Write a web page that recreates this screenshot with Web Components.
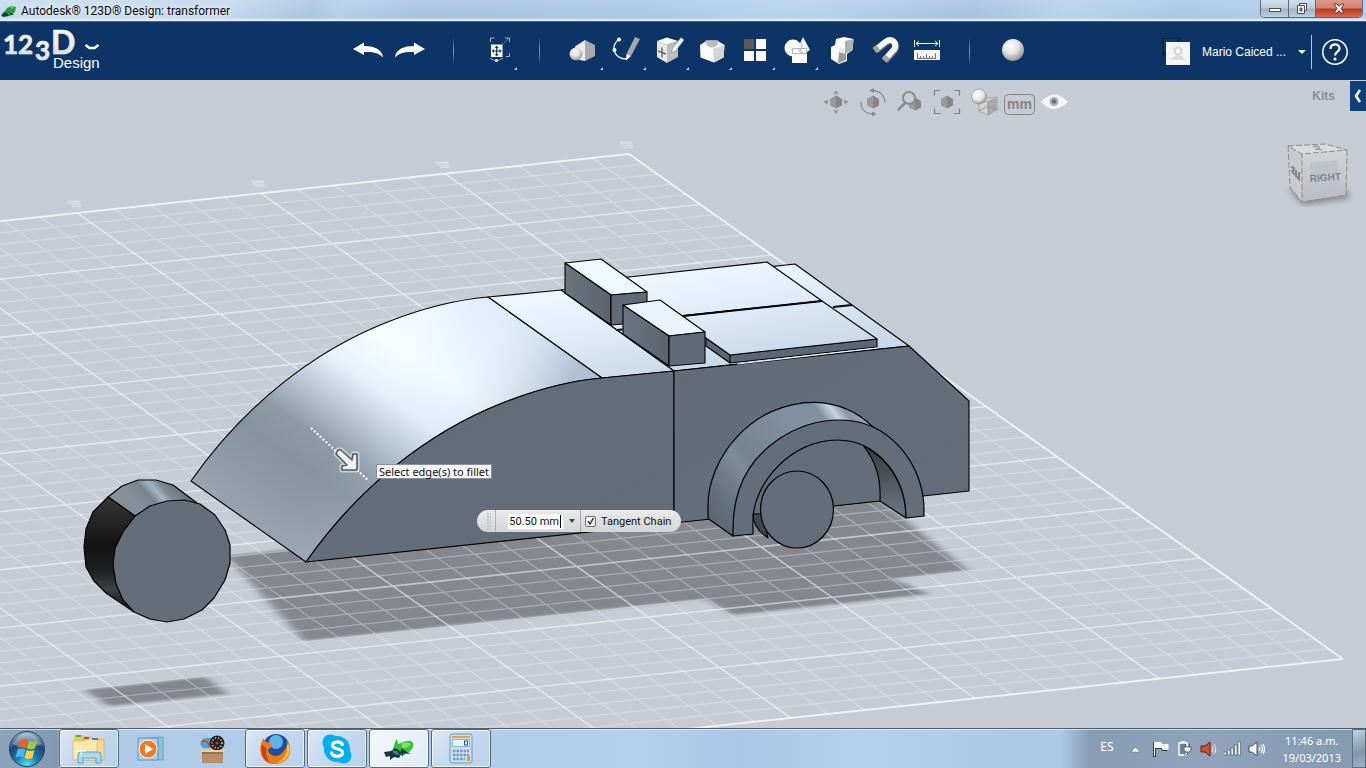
<!DOCTYPE html>
<html lang="en">
<head>
<meta charset="utf-8">
<title>Autodesk 123D Design: transformer</title>
<style>
html, body { height: 100%; margin: 0; }
body { font-family: "Noto Sans", "Open Sans", sans-serif; font-size: 12px; overflow: hidden; }
</style>
</head>
<body>
<design-app></design-app>

<template id="t-design-app">
  <style>
    :host { display: flex; flex-direction: column; height: 100%; }
    model-viewport { flex: 1; min-height: 0; }
  </style>
  <title-bar>Autodesk® 123D® Design: transformer</title-bar>
  <app-toolbar></app-toolbar>
  <model-viewport></model-viewport>
  <task-bar></task-bar>
</template>

<template id="t-title-bar">
  <style>
    :host { display: flex; align-items: flex-start; height: 22px; box-sizing: border-box; border-bottom: 1px solid #4f5d70;
      background: linear-gradient(rgba(255,255,255,.15), rgba(255,255,255,0) 85%, #e4eef8 96%),
        linear-gradient(112deg, #c4d9ee 0, #c0d6ed 17%, #a9c4e1 23%, #b2cdea 25%, #a6c2df 31%, #aac7e5 48%, #b6d2ee 58%, #a5c1df 71%, #b5d1ec 78%, #a8c6e3 86%, #b3cfeb 100%); }
    .name { display: flex; align-items: center; gap: 4px; height: 21px; flex: 1; padding-left: 1px; font-family: Roboto, sans-serif; line-height: 20px; color: #0a0a0a; text-shadow: 0 0 6px #fff, 0 0 10px #fff; }
    .buttons { display: flex; height: 18px; margin-right: 3px; border: 1px solid #5d6b7c; border-top: 0; border-radius: 0 0 5px 5px; box-sizing: border-box; overflow: hidden; }
    button { border: 0; padding: 0; margin: 0; height: 17px; background: linear-gradient(#d2dfec, #bccbdb 48%, #9eb1c6 52%, #bccfe2); border-right: 1px solid #5d6b7c; }
    button:nth-child(1) { width: 28px; } button:nth-child(2) { width: 27px; }
    .buttons .x { width: 46px; border: 0; background: linear-gradient(#e0998c, #d17f70 48%, #b9391f 52%, #d9694d); }
    .buttons svg { display: block; margin: auto; }
  </style>
  <div class="name">
    <svg width="16" height="16" viewBox="0 0 16 16"><path d="M1 10l3-2 2-3 4-2 5 1-1 5-5 4-5-1z" fill="#2a9a3c"/><path d="M0 12l5-3 3 4-6 1zM8 9l5 3-3 0z" fill="#123c30"/><path d="M8 4l5-1-1 3z" fill="#54d955"/></svg>
    <span><slot></slot></span>
  </div>
  <div class="buttons">
    <button aria-label="Minimize"><svg width="14" height="12" viewBox="0 0 14 12"><rect x="1.500" y="5.500" width="11" height="3" fill="#fff" stroke="#444d5c"/></svg></button>
    <button aria-label="Restore"><svg width="14" height="13" viewBox="0 0 14 13"><path d="M4.500 1.500h7v7h-7z" fill="#fff" stroke="#444d5c"/><path d="M2.500 3.500h7v8h-7z" fill="#fff" stroke="#444d5c"/><path d="M5 6h2v3H5z" fill="#8ea0b5" stroke="#444d5c"/></svg></button>
    <button class="x" aria-label="Close"><svg width="14" height="12" viewBox="0 0 14 12"><path d="M2 1h3l2 2.500L9 1h3L9 5.500 12 10H9L7 7.500 5 10H2l3-4.500z" fill="#fff" stroke="#5b3a40"/></svg></button>
  </div>
</template>

<template id="t-tool-button">
  <style>
    :host { display: block; width: 43px; height: 58px; }
    button { display: block; width: 100%; height: 100%; padding: 0; border: 0; background: none; position: relative; }
    .more { display: none; position: absolute; right: 1px; bottom: 10px; border: solid; border-width: 0 0 3px 3px; border-color: transparent transparent #d0d0d0 transparent; }
    :host([menu]) .more { display: block; }
  </style>
  <button><slot></slot><i class="more"></i></button>
</template>

<template id="t-app-toolbar">
  <style>
    :host { display: grid; grid-template-columns: minmax(0,346fr) 688px minmax(0,332fr); height: 58px; background: #0d3467; color: #fff; }
    .tools, .user { display: flex; }
    tool-button svg, .logo svg { display: block; }
    .sep { width: 43px; display: flex; justify-content: center; align-items: center; }
    .sep::before { content: ""; width: 1px; height: 26px; background: linear-gradient(rgba(160,170,180,.1), #8c9aae 50%, rgba(160,170,180,.1)); }
    .logo { padding: 0; border: 0; background: none; color: #fff; text-align: left; width: 110px; height: 58px; }
    .user { justify-content: flex-end; align-items: center; padding: 1px 17px 0 0; font: 12px "Liberation Sans", Arial, sans-serif; }
    .who { display: flex; align-items: center; padding: 0; border: 0; background: none; color: #fff; font: inherit; gap: 12px; }
    .caret { border: solid transparent; border-width: 4px 4px 0; border-top-color: #fff; }
    .help { margin-left: 5px; padding: 0 0 0 9px; height: 34px; border: 0; border-left: 1px solid #a7c8e6; background: none; }
    .help svg { display: block; }
  </style>
  <button class="logo" aria-label="123D Design menu">
    <svg width="110" height="58" viewBox="0 0 110 58">
      <defs><linearGradient id="lg" x1="0" y1="0" x2="0" y2="1"><stop offset="0" stop-color="#fff"/><stop offset="1" stop-color="#d5d8dd"/></linearGradient></defs>
      <g fill="url(#lg)" stroke="#eceef1" stroke-width=".7" font-family="Lato, sans-serif" font-weight="700">
        <text x="3" y="32" font-size="26">12</text><text x="35" y="38" font-size="26">3</text>
        <text x="51" y="32" font-size="32">D</text>
      </g>
      <text x="53" y="46" font-size="15" font-family="Liberation Sans, Arial, sans-serif" fill="#fff">Design</text>
      <path d="M85.500 23l4 3h5l4-3" fill="none" stroke="#fff" stroke-width="2.500"/>
    </svg>
  </button>
  <div class="tools">
    <tool-button><svg width="43" height="58"><path d="M7 27L18 20.500V24c10 0 18 3 19 11.500-4-4.500-10-6-19-5.500v3z" fill="#fff"/></svg></tool-button>
    <tool-button><svg width="43" height="58"><path d="M36 27L25 20.500V24c-10 0-18 3-19 11.500 4-4.500 10-6 19-5.500v3z" fill="#fff"/></svg></tool-button>
    <span class="sep"></span>
    <tool-button menu><svg width="43" height="58">
      <defs>
        <radialGradient id="sp" cx=".4" cy=".32" r=".7"><stop offset="0" stop-color="#fff"/><stop offset=".5" stop-color="#e3e3e3"/><stop offset="1" stop-color="#8f8f8f"/></radialGradient>
      </defs>
      <rect x="16" y="22.500" width="11.500" height="12.500" fill="#fff"/><path d="M21.700 25v8M18 29h7.500" stroke="#0d3467" stroke-width="1.200"/><path d="M19.700 26l2-2.500 2 2.500zM19.700 32l2 2.500 2-2.500zM19 27l-2.300 2 2.300 2zM24.500 27l2.300 2-2.300 2z" fill="#0d3467"/>
      <path d="M15.500 20v-4h4M30 16h4.500v4M34.500 31v3.500H31" fill="none" stroke="#a9b6c8"/><path d="M27 22.500l6-5.500" stroke="#8f9fb5" stroke-dasharray="2 1"/>
      <path d="M15 36q6 5 13 0" fill="none" stroke="#93a5bc"/><circle cx="21.500" cy="38.500" r="1.500" fill="#fff"/></svg></tool-button>
    <span class="sep"></span>
    <tool-button menu><svg width="43" height="58"><path d="M14 24.500L24 18v21l-10-2z" fill="#ececec"/><path d="M24 18l10 5v11l-10 5z" fill="#a9a9a9"/><circle cx="15" cy="32" r="6.500" fill="url(#sp)"/></svg></tool-button>
    <tool-button menu><svg width="43" height="58"><path d="M15 17Q9 22 10 28q2 9 13 9" fill="none" stroke="#e8ecf2" stroke-width="1.300"/><circle cx="15" cy="17.500" r="2" fill="#fff"/><circle cx="10.500" cy="28" r="2" fill="#fff"/><path d="M31 15l5 2-9 17-4.500-2z" fill="#a8a8a8"/><path d="M22.500 32l4.500 2-5 4.500z" fill="#fff"/></svg></tool-button>
    <tool-button menu><svg width="43" height="58"><path d="M10 19l10-3.500 11 3.500-11 4z" fill="#fff"/><path d="M10 19l10 4v18l-10-6z" fill="#e9e9e9"/><path d="M20 23l11-4v16l-11 6z" fill="#bdbdbd"/><path d="M15 25.500v10M11 29l8 3" stroke="#6a6a6a" stroke-width="1.500"/><path d="M34 15.500l3 2.500-8.500 11-4 2 1-4.500z" fill="#f6f6f6" stroke="#8a8f98" stroke-width=".7"/></svg></tool-button>
    <tool-button menu><svg width="43" height="58"><path d="M10 23l7-4.500h10l7.500 4.500-1 12.500-9.500 5-13.500-5z" fill="#fafafa"/><path d="M23 27l11.500-4-1 12.500-9.500 5z" fill="#d4d4d4"/><path d="M15.500 18.500h13c0 5-3 7-6.500 7s-6.500-2-6.500-7z" fill="#bcbcbc"/></svg></tool-button>
    <tool-button menu><svg width="43" height="58"><path d="M11 17h10v10H11z" fill="#5b5b5b"/><path d="M23 17h10v10H23zM11 29h10v10H11zM23 29h10v10H23z" fill="#f8f8f8"/></svg></tool-button>
    <tool-button menu><svg width="43" height="58"><circle cx="17" cy="26" r="8.500" fill="#fff"/><path d="M27 15l7 13q-3 3-7 3t-6-3z" fill="#f4f4f4"/><path d="M16 26h15v15H16z" fill="#fff"/><path d="M16.500 26.500h14v5h-14zM24 30q2-3 2-8M22 27q2 4 5 4" fill="none" stroke="#b4b4b4"/></svg></tool-button>
    <tool-button><svg width="43" height="58"><path d="M12 25l4-2 1-6 8-2 9.500 2-1 11-5.500 4v7l-8 3-8-5z" fill="#fff"/><path d="M26 19l8.500-2-1 11.500-7.500 3.500z" fill="#b0b0b0"/><path d="M20 30l7 1v7l-8 3.500z" fill="#9a9a9a"/><path d="M20 30l1-5 5 2v5z" fill="#e8e8e8"/></svg></tool-button>
    <tool-button><svg width="43" height="58"><path d="M13 28L24 19.500c6-4.500 12 2 8 8L22.500 38" transform="translate(1 1)" fill="none" stroke="#6d6d6d" stroke-width="6"/><path d="M13 28L24 19.500c6-4.500 12 2 8 8L22.500 38" fill="none" stroke="#fff" stroke-width="6"/><path d="M12.500 28.500l4-3M22 38.500l3.500-4" stroke="#a3a3a3" stroke-width="6"/></svg></tool-button>
    <tool-button><svg width="43" height="58"><path d="M9.500 18v7M34.500 18v7M11 21.500h22M14 19l-3 2.500 3 2.500M30 19l3 2.500-3 2.500" fill="none" stroke="#fff"/><path d="M9 28h26v10H9z" fill="#f4f4f4"/><path d="M12.500 31v6M15.500 34v3M18.500 34v3M21.500 32v5M24.500 34v3M27.500 34v3M30.500 31v6M12 36.500h19" stroke="#777"/></svg></tool-button>
    <span class="sep"></span>
    <tool-button><svg width="43" height="58"><circle cx="22" cy="28" r="11" fill="url(#sp)"/></svg></tool-button>
  </div>
  <div class="user">
    <button class="who">
      <svg width="28" height="30" viewBox="0 0 28 30"><path d="M0 1h20L0 21z" fill="#06264d"/><path d="M2 2h15L2 15z" fill="#0b4068"/><path d="M11 5l3 0-2 2z" fill="#c33"/><rect x="4" y="5" width="24" height="23" fill="#f4f4f4"/><circle cx="16" cy="14" r="3.500" fill="none" stroke="#d6d6d6" stroke-width="2"/><path d="M10.500 22q5.500-6 11 0z" fill="#e6e6e6" stroke="#d6d6d6" stroke-width="1.500"/></svg>
      <span>Mario Caiced ...</span><i class="caret"></i></button>
    <button class="help" aria-label="Help"><svg width="28" height="28" viewBox="0 0 28 28"><circle cx="14" cy="14" r="12.200" fill="none" stroke="#fff" stroke-width="1.500"/><path d="M9.500 11c0-6 9-6 9-.8 0 3.600-4.500 3.600-4.500 7.300" fill="none" stroke="#fff" stroke-width="2.200"/><circle cx="14" cy="21" r="1.600" fill="#fff"/></svg></button>
  </div>
</template>

<template id="t-view-tools">
  <style>
    :host { display: flex; }
    button { width: 37px; height: 34px; padding: 0; border: 0; background: none; }
    svg { display: block; }
  </style>
  <button aria-label="Pan"><svg width="37" height="34">
    <defs><g id="cube"><path d="M-6-3L0-6.500V6.500L-6 3.500z" fill="#9a9a9a"/><path d="M0-6.500L6-3V3.500L0 6.500z" fill="#858585"/></g></defs>
    <use href="#cube" x="18" y="17"/><path d="M16 9l2-3.500L20 9l-2-1zM16 25l2 3.500 2-3.500-2 1zM10 15l-4 2 4 2-1-2zM26 15l4 2-4 2 1-2z" fill="#8c8c8c" stroke="#8c8c8c" stroke-width=".6"/></svg></button>
  <button aria-label="Orbit"><svg width="37" height="34"><use href="#cube" x="18" y="17"/><path d="M17 5.500c8 0 12.500 5 13 12M6 17c0 8 5 12 13 12" fill="none" stroke="#8c8c8c" stroke-width="1.300"/><path d="M14 5.500l5-2.500v5zM22 29l-5-2.500v5z" fill="#8c8c8c"/></svg></button>
  <button aria-label="Zoom"><svg width="37" height="34"><use href="#cube" x="23" y="19"/><circle cx="17" cy="13" r="6" fill="#c5ccd4" stroke="#8a8a8a" stroke-width="2"/><path d="M13 18l-7 7" stroke="#8a8a8a" stroke-width="2.500"/></svg></button>
  <button aria-label="Fit"><svg width="37" height="34"><use href="#cube" x="18" y="17"/><path d="M5.500 10.500v-5h6M25.500 5.500h5v5M5.500 23.500v5h6M25.500 28.500h5v-5" fill="none" stroke="#7f7f7f" stroke-width="1.200"/></svg></button>
  <button aria-label="Visual style"><svg width="37" height="34"><defs><radialGradient id="vs" cx=".4" cy=".35" r=".7"><stop offset="0" stop-color="#fff"/><stop offset=".6" stop-color="#e2e2e2"/><stop offset="1" stop-color="#8d8d8d"/></radialGradient></defs><path d="M13 16l9-3 9-1v13l-9 5-9-4z" fill="#d0d2d5" stroke="#9b9b9b" stroke-width=".8"/><path d="M22 16l9-4v13l-9 5z" fill="#a9a9a9"/><path d="M13 16l9 1v13M13 26l9-5 9 4" fill="none" stroke="#8f8f8f" stroke-width=".8"/><circle cx="13" cy="11.500" r="7.500" fill="url(#vs)" stroke="#8a8a8a" stroke-width=".6"/></svg></button>
  <button aria-label="Units"><svg width="37" height="34"><rect x="1.500" y="9.500" width="30" height="20" rx="4" fill="none" stroke="#858585"/><text x="16.500" y="24" text-anchor="middle" font-family="Liberation Sans, Arial, sans-serif" font-size="14" font-weight="700" fill="#858585">mm</text></svg></button>
  <button aria-label="Visibility"><svg width="37" height="34"><path d="M1 17q13-15 27 0-14 14-27 0z" fill="#f3f5f7"/><circle cx="14" cy="16.500" r="4.500" fill="#aeb0b2"/><circle cx="14" cy="16.500" r="2.200" fill="#6e6e6e"/></svg></button>
</template>

<template id="t-fillet-panel">
  <style>
    :host { display: inline-flex; height: 22px; width: 204px; border-radius: 11px; background: linear-gradient(#e9ebeb, #d2d5d5); font: 11px Roboto, sans-serif; color: #111; align-items: center; box-sizing: border-box; }
    .grip { width: 19px; height: 22px; border-right: 1px solid #aab0b6; display: flex; justify-content: flex-end; align-items: center; box-sizing: border-box; }
    .grip::before { content: ""; width: 4px; height: 17px; margin-right: 4px; background: radial-gradient(circle at 1px 1px, #bfc3c6 1px, transparent 1px) 0 0/3px 3px; }
    input[type=text] { width: 57px; height: 17px; margin-left: 11px; box-sizing: border-box; padding: 0 4px 0 0; border: 1px solid #dfe2e4; background: #fff; font: 11px Roboto, sans-serif; text-align: right; color: #111; outline: 0; }
    .drop { width: 17px; height: 22px; padding: 0; border: 0; border-right: 1px solid #a4abb2; background: none; display: flex; justify-content: center; align-items: center; box-sizing: border-box; }
    .drop::before { content: ""; border: solid transparent; border-width: 4px 3px 0; border-top-color: #444; }
    label { display: flex; align-items: center; gap: 5px; margin-left: 4px; white-space: nowrap; }
    input[type=checkbox] { appearance: none; width: 11px; height: 11px; margin: 0; border: 1px solid #6c6f72; border-radius: 2px; background: #efefef url("data:image/svg+xml,%3Csvg xmlns='http://www.w3.org/2000/svg' viewBox='0 0 9 9'%3E%3Cpath d='M2 4l2 3 3.500-6' fill='none' stroke='%23222' stroke-width='1.300'/%3E%3C/svg%3E"); }
    .field { position: relative; display: flex; }
    .field::after { content: ""; position: absolute; right: 3px; top: 2px; width: 1px; height: 13px; background: #000; }
  </style>
  <span class="grip"></span>
  <span class="field"><input type="text" value="50.50 mm" aria-label="Radius"></span>
  <button class="drop" aria-label="Units"></button>
  <label><input type="checkbox" checked><span>Tangent Chain</span></label>
</template>

<template id="t-model-viewport">
  <style>
    :host { display: block; position: relative; overflow: hidden; background: #c5ccd5; }
    .scene { display: block; width: 100%; height: 100%; }
    view-tools { position: absolute; top: 5px; right: 289px; }
    .kits { position: absolute; top: 1px; right: 0; display: flex; align-items: center; gap: 15px; }
    .kits a { font: bold 12px "Liberation Sans", Arial, sans-serif; color: #8a8c8f; text-decoration: none; }
    .kits button { width: 16px; height: 30px; padding: 0; border: 0; background: #114077; }
    .kits svg, .cube { display: block; }
    .cube { position: absolute; top: 57px; right: 10px; }
    .tip { position: absolute; top: 384px; left: 376px; height: 15px; box-sizing: border-box; padding: 0 2px; border: 1px solid #8f8f96; background: #f7f7fb; font-size: 11px; line-height: 13px; color: #111; white-space: nowrap; }
    fillet-panel { position: absolute; top: 430px; left: 477px; }
  </style>
  <svg class="scene" viewBox="0 80 1366 648" preserveAspectRatio="xMidYMid slice">
    <defs>
      <linearGradient id="hood" gradientUnits="userSpaceOnUse" x1="191" y1="481" x2="376" y2="219">
        <stop offset="0" stop-color="#98a3af"/><stop offset=".24" stop-color="#84939c"/><stop offset=".34" stop-color="#8d9ba6"/><stop offset=".46" stop-color="#bac9d5"/><stop offset=".57" stop-color="#e6f2fa"/><stop offset=".72" stop-color="#f7ffff"/><stop offset="1" stop-color="#e4effc"/></linearGradient>
      <linearGradient id="hoodShade" gradientUnits="userSpaceOnUse" x1="430" y1="313" x2="555" y2="401">
        <stop offset="0" stop-color="#b8cfe8" stop-opacity="0"/><stop offset=".45" stop-color="#c0d8f4" stop-opacity=".18"/><stop offset=".7" stop-color="#a9c0d6" stop-opacity=".32"/><stop offset="1" stop-color="#8499ad" stop-opacity=".55"/></linearGradient>
      <linearGradient id="top" gradientUnits="userSpaceOnUse" x1="660" y1="262" x2="680" y2="372"><stop offset="0" stop-color="#effaff"/><stop offset=".45" stop-color="#e2effb"/><stop offset="1" stop-color="#c9d9e7"/></linearGradient>
      <linearGradient id="side" x1="0" y1="0" x2="1" y2="1"><stop offset="0" stop-color="#626c79"/><stop offset=".5" stop-color="#636e7a"/><stop offset="1" stop-color="#646d79"/></linearGradient>
      <linearGradient id="fender" gradientUnits="userSpaceOnUse" x1="708" y1="530" x2="870" y2="410"><stop offset="0" stop-color="#56616b"/><stop offset=".15" stop-color="#64717e"/><stop offset=".32" stop-color="#7c8b98"/><stop offset=".38" stop-color="#748390"/><stop offset=".65" stop-color="#8191a3"/><stop offset=".79" stop-color="#82919f"/><stop offset=".85" stop-color="#c5d4e1"/><stop offset=".9" stop-color="#8593a0"/><stop offset=".96" stop-color="#a8a9ac"/><stop offset="1" stop-color="#7a858f"/></linearGradient>
      <linearGradient id="inner" gradientUnits="userSpaceOnUse" x1="880" y1="450" x2="890" y2="512"><stop offset="0" stop-color="#3b3f44"/><stop offset=".5" stop-color="#50575f"/><stop offset="1" stop-color="#66737f"/></linearGradient>
      <linearGradient id="tyre" gradientUnits="userSpaceOnUse" x1="110" y1="500" x2="110" y2="600"><stop offset="0" stop-color="#353535"/><stop offset=".45" stop-color="#131313"/><stop offset=".72" stop-color="#202122"/><stop offset=".9" stop-color="#3e4246"/><stop offset="1" stop-color="#20272c"/></linearGradient>
      <linearGradient id="tyreTop" gradientUnits="userSpaceOnUse" x1="122" y1="516" x2="172" y2="470"><stop offset="0" stop-color="#848f99"/><stop offset=".3" stop-color="#84909a"/><stop offset=".5" stop-color="#75838e"/><stop offset=".62" stop-color="#a5b5c2"/><stop offset=".72" stop-color="#7d8b97"/><stop offset="1" stop-color="#5b6873"/></linearGradient>
      <linearGradient id="block" x1="0" y1="0" x2="1" y2="0"><stop offset="0" stop-color="#6b7680"/><stop offset="1" stop-color="#5b636d"/></linearGradient>
      <filter id="soft" x="-10%" y="-10%" width="120%" height="120%" color-interpolation-filters="sRGB"><feGaussianBlur stdDeviation="5 1"/></filter>
    </defs>
    <g filter="url(#soft)" fill="#84888e">
      <path d="M226 556L570 520 880 500 968 570 893 579 929 594 733 615 705 599 304 641z"/>
      <path d="M85 690L205 677 228 694 109 706z"/>
    </g>
    <g id="grid" fill="none" stroke="#fff"></g>
    <g fill="none" stroke="#fff" stroke-opacity=".4">
      <path id="mark" d="M67 201l13 0M68 203l12-1M70 205l11-1M72 207l10-1M69 201l6 6M74 201l6 6" stroke-width="1.100"/>
      <use href="#mark" x="184" y="-20"/><use href="#mark" x="368" y="-39"/><use href="#mark" x="552" y="-59"/>
    </g>
    <g stroke="#000" stroke-width="1.100" stroke-linejoin="round">
      <path d="M561 290L795 264 909 346 674 371z" fill="url(#top)"/>
      <path d="M488 297L561 290 674 371 602 378z" fill="url(#top)"/>
      <path d="M191 481C245 404 315 351 385 323 415 311 452 300 488 297L602 378C567 381 530 392 500 404 430 432 360 485 306 562z" fill="url(#hood)" stroke="none"/>
      <path d="M191 481C245 404 315 351 385 323 415 311 452 300 488 297L602 378C567 381 530 392 500 404 430 432 360 485 306 562z" fill="url(#hoodShade)"/>
      <path d="M306 562C360 485 430 432 500 404 530 392 567 381 602 378L674 371V523z" fill="url(#side)"/>
      <path d="M674 371L909 346 969 401V491L674 523z" fill="url(#side)"/>
      <path d="M616 330L640 328" stroke-width="2"/>
      <path d="M833 307L852 305" stroke-width="2.200"/>
      <path d="M610 279L767 262 822 301 650 319z" fill="url(#top)"/>
      <path d="M706 338L730 355 877 339V347L730 363 706 346z" fill="#5c6772"/>
      <path d="M683 316L822 301 877 339 730 355 706 338z" fill="url(#top)"/>
      <path d="M683 316L822 301" stroke-width="2"/><path d="M730 355V363"/>
      <path d="M737 364L877 348" stroke="#e9f4fc"/>
      <path d="M565 263L601 259 647 292 611 295z" fill="#eef9ff"/><path d="M565 263L611 295V325L565 293z" fill="url(#block)"/><path d="M611 295L647 292V322L611 325z" fill="#5f6b77"/>
      <path d="M623 305L660 300 705 332 669 336z" fill="#e9f4fe"/><path d="M623 305L669 336V366L623 334z" fill="url(#block)"/><path d="M669 336L705 332V363L669 366z" fill="#5f6b77"/>
    </g>
    <g stroke="#000" stroke-width="1.200" stroke-linejoin="round">
      <path d="M708 518.500V505C708 460 750 402 815 402.300 838 403 858 412 873 427L840 440C790 440 755 485 751 520L733 536z" fill="url(#fender)"/>
      <path d="M840 440Q860 441 864 446C876 462 880 480 880 501L838 505.500 760 514 753 520C753 485 790 440 840 440z" fill="#636e7a" stroke="none"/>
      <path d="M833 506L880 501"/>
      <path d="M863 445C877 463 881 480 880 501L906 518C906 490 894 463 863 445z" fill="url(#inner)"/>
      <path d="M733 536C733 517 734 505 739 490 752 450 795 420 840 420 890 420 924 465 924 510V516L906 518C906 480 880 440 837 440 790 440 753 485 753 520V534z" fill="#636e7a"/>
      <path d="M753 514H762L768 538Q753 528 753 514z" fill="#3f474f"/>
      <ellipse cx="797" cy="509.500" rx="36.500" ry="38.500" fill="#636e7a"/>
    </g>
    <g stroke="#000" stroke-width="1.200" stroke-linejoin="round">
      <path d="M108 497L122 486 138 480H156L173 485 197 503 170 510 135 516z" fill="url(#tyreTop)"/>
      <path d="M108 497L93 512 86 529 84 547 86 567 94 581 106 593 134 612 123 565 135 516z" fill="url(#tyre)"/>
      <path d="M167 501L185 500 200 504 215 515 225 530 230 545V563L225 580 214 598 202 610 184 619 167 622 150 619 134 612 123 600 116 584 113 565 115 548 123 532 135 516 150 506z" fill="#636e7a"/>
    </g>
    <path d="M311 428L338 453M357 470L369 481" stroke="#5f6a70" stroke-width="3.500" stroke-opacity=".5" stroke-dasharray="2 2"/>
    <path d="M311 428L338 453M357 470L369 481" stroke="#fff" stroke-width="2.500" stroke-dasharray="2 2"/>
    <path d="M338 450L336 454 347 465 342 466 342 470 357 470 357 454 353 454 352 460 341 450z" fill="#e9ecee" stroke="#fff" stroke-width="5" stroke-opacity=".5" stroke-linejoin="round"/>
    <path d="M338 450L336 454 347 465 342 466 342 470 357 470 357 454 353 454 352 460 341 450z" fill="#eceeef" stroke="#55595c" stroke-width="1.600" stroke-linejoin="round"/>
  </svg>
  <view-tools></view-tools>
  <div class="kits"><a href="#kits">Kits</a><button aria-label="Open kits"><svg width="16" height="30"><path d="M10 9l-4 6 4 6" fill="none" stroke="#fff" stroke-width="2.500"/></svg></button></div>
  <svg class="cube" width="76" height="76" viewBox="1280 137 76 76">
    <defs><filter id="cs"><feGaussianBlur stdDeviation="3"/></filter><linearGradient id="cf" x1="0" y1="0" x2="0" y2="1"><stop offset="0" stop-color="#d3d5d8"/><stop offset="1" stop-color="#b9bbbe"/></linearGradient></defs>
    <path d="M1288 188L1303 205 1350 198 1346 190z" fill="#6d747c" filter="url(#cs)" opacity=".8"/>
    <path d="M1288 146L1325 144 1347 150 1302 154z" fill="#d9dbde"/><path d="M1288 146L1302 154V202L1290 187z" fill="#c8cacd"/><path d="M1302 154L1347 150 1346 195 1302 202z" fill="url(#cf)"/>
    <path d="M1288 146L1325 144 1347 150 1302 154zM1288 146L1290 187 1302 202V154M1347 150L1346 195 1302 202" fill="none" stroke="#8b8e91" stroke-dasharray="6 2"/>
    <path d="M1310 163l28-3v28l-28 4z" fill="#bcc3cd"/>
    <text x="1310" y="182" font-family="Liberation Sans, Arial, sans-serif" font-size="10" font-weight="700" fill="#7c838e" transform="rotate(-4 1310 182)">RIGHT</text>
    <path d="M1291 167l3 1v2l-2 1 3 4M1296 170v6l3 3v-7" fill="none" stroke="#84888e" stroke-width="2"/><path d="M1313 147q4-2 6 0t-4 2l7 1" fill="none" stroke="#a2a5a8" stroke-width="1.500"/>
  </svg>
  <div class="tip" role="tooltip">Select edge(s) to fillet</div>
  <fillet-panel></fillet-panel>
</template>

<template id="t-task-button">
  <style>
    :host { display: block; width: 60px; height: 40px; }
    button { display: flex; align-items: center; justify-content: center; width: 100%; height: 100%; padding: 0; box-sizing: border-box; border: 0; background: none; }
    :host([open]) button { border: 1px solid #56687c; border-radius: 3px; box-shadow: inset 0 0 0 1px rgba(255,255,255,.7); background: linear-gradient(135deg, rgba(255,255,255,.55), rgba(255,255,255,.25) 45%, rgba(255,255,255,.1)); }
    :host([active]) button { background: linear-gradient(135deg, rgba(255,255,255,.85), rgba(255,255,255,.6)); }
  </style>
  <button><slot></slot></button>
</template>

<template id="t-task-bar">
  <style>
    :host { display: flex; height: 40px; box-sizing: border-box; border-top: 1px solid #4e5c6b;
      background: linear-gradient(rgba(255,255,255,.6) 0, rgba(255,255,255,.6) 1px, transparent 1px), linear-gradient(90deg, #8ea4bc 0, #8299b3 58px, #b0cbe8 60px, #b2cdea 500px, #b3d0ed 640px, #a9c6e4 740px, #b5d1ed 860px, #aac7e4 1030px, #aecae7 1060px, #869cb3 1090px, #8fa4ba 1200px, #8499b0 1366px); }
    .start { width: 59px; padding: 0 5px 0 0; border: 0; background: none; }
    svg { display: block; margin: auto; }
    .apps { display: flex; flex: 1; gap: 2px; }
    .apps task-button { height: 39px; }
  </style>
  <button class="start" aria-label="Start"><svg width="38" height="38" viewBox="0 0 38 38">
    <defs><radialGradient id="orb" cx=".5" cy=".95" r=".9"><stop offset="0" stop-color="#4fe3f5"/><stop offset=".35" stop-color="#1c7fb4"/><stop offset=".7" stop-color="#1b4873"/><stop offset="1" stop-color="#8fa9bf"/></radialGradient></defs>
    <circle cx="19" cy="19" r="17.500" fill="url(#orb)" stroke="#253f58"/><path d="M5 14Q19-8 33 14q-14 8-28 0z" fill="#fff" opacity=".3"/>
    <path d="M12 10q4-2 8 0l-2 8q-4-2-8 0z" fill="#f0602b"/><path d="M21 10.500q4 2 8 0l-2 8q-4 2-8 0z" fill="#93cc3f"/><path d="M9.500 19.500q4-2 8 0l-2 8q-4-2-8 0z" fill="#4cb4f0"/><path d="M18.500 20q4 2 8 0l-2 8q-4 2-8 0z" fill="#fdcf3b"/></svg></button>
  <div class="apps">
    <task-button open><svg width="34" height="32" viewBox="0 0 34 32"><path d="M2 2h9l2 3h18v22H2z" fill="#e9c96b"/><path d="M11 4h9l2 3h10v20H11z" fill="#f1da8c" stroke="#c9a64c" stroke-width=".6"/><path d="M1 8h11l3-2h10v21H1z" fill="#f9eaa8" stroke="#cfae55" stroke-width=".6"/><path d="M4 2h5v2H4z" fill="#36b24a"/><path d="M12 4h5v2h-5z" fill="#d7442e"/><path d="M20 5h6v2h-6z" fill="#3f7fd0"/><path d="M6 30V22q0-3 3-3h17q3 0 3 3v8h-5v-5H11v5z" fill="#a9d8ef" stroke="#5fa3c8"/><path d="M9 13v10M4 18h10" stroke="#fff"/></svg></task-button>
    <task-button><svg width="30" height="30" viewBox="0 0 30 30"><path d="M8 4l19-1v23l-19-1z" fill="#8fc0de" stroke="#6aa0c2"/><path d="M2 4h20v22H2z" fill="#a9d0e8" stroke="#5d96bb"/><circle cx="12" cy="15" r="9" fill="#f07a1c" stroke="#fff"/><path d="M9 10l8 5-8 5z" fill="#fff"/></svg></task-button>
    <task-button><svg width="32" height="32" viewBox="0 0 32 32"><path d="M3 11q2-8 11-6l8 10H6z" fill="#4aa8d8"/><path d="M5 9q4-4 8 5" fill="none" stroke="#d8442c" stroke-width="2"/><circle cx="20" cy="10" r="7.500" fill="#222"/><circle cx="20" cy="10" r="5" fill="none" stroke="#c9bd9e" stroke-dasharray="1 2" stroke-width="2"/><circle cx="20" cy="10" r="1.500" fill="#d33"/><path d="M3 17h25l-2 3H5z" fill="#edcfa4"/><path d="M5 19h21v11H5z" fill="#b58f6c"/><path d="M5 19h21v2H5z" fill="#94714f"/></svg></task-button>
    <task-button open><svg width="34" height="34" viewBox="0 0 34 34"><circle cx="18" cy="15" r="13" fill="#1d4f9c"/><circle cx="18" cy="10" r="7" fill="#5fb2e6"/><path d="M29 7c6 9 4 24-11 25C6 33 0 23 3 12l2-6 3 4 6 1-1 4-3 3c1 6 10 8 14 3 3-3 6-7 5-14z" fill="#ec7a1b"/><path d="M31 13c2 9-3 17-12 18 8-4 11-10 10-18z" fill="#ffcb3d"/><path d="M4 12c-2 8 1 16 8 19-4-6-5-10-3-14z" fill="#c6421a"/></svg></task-button>
    <task-button open><svg width="32" height="32" viewBox="0 0 32 32"><circle cx="16" cy="16" r="13" fill="#00aff0"/><circle cx="9.500" cy="9.500" r="8" fill="#00aff0"/><circle cx="22.500" cy="22.500" r="8" fill="#00aff0"/><path d="M21.500 11.500q-2-3-6-2.500-4 .5-4 3.500c0 4 10 2.500 10 7 0 3-3 3.800-5.500 3.800q-4 0-5.500-3.300" fill="none" stroke="#fff" stroke-width="3.200" stroke-linecap="round"/></svg></task-button>
    <task-button open active><svg width="32" height="28" viewBox="0 0 32 28"><path d="M10 14l2-7 2-3 1 5 5-2q8-3 10 1t-5 10q-7 5-13 0z" fill="#35c435"/><path d="M19 8q7-2 9 1-4 5-9 4z" fill="#7be45a"/><path d="M1 17l7-1 4-3 7 4-3 6-5-1-4 3 0-4-4 1zM18 13l6 4 4 2-7-1-2 4z" fill="#17353a"/><path d="M9 15l5 1 3 4-6-1z" fill="#3f7fa0"/></svg></task-button>
    <task-button open><svg width="24" height="32" viewBox="0 0 24 32"><rect x="1" y="1" width="22" height="29" rx="2" fill="#c7dff2" stroke="#6d9cc4"/><path d="M3 3h18v2H3z" fill="#f0a13c"/><rect x="3.500" y="6.500" width="17" height="7" fill="#e9f2fa" stroke="#8fb4d3"/><rect x="15.500" y="8" width="3" height="4" fill="none" stroke="#33536f"/><path d="M4 18h16M4 22h16M4 26h12" stroke="#7797b8" stroke-width="2.500" stroke-dasharray="2.500 1"/><path d="M18 23h3v5h-3z" fill="#f09a28"/></svg></task-button>
  </div>
  <system-tray></system-tray>
</template>

<template id="t-system-tray">
  <style>
    :host { display: flex; align-items: center; color: #fff; }
    button { padding: 0; border: 0; background: none; color: inherit; font: inherit; }
    .lang { font-size: 12px; margin: 0 18px 5px 0; }
    .icons { display: flex; gap: 7px; margin: 1px 17px 0 0; }
    svg { display: block; }
    .icons button:first-child { margin-right: 5px; }
    time { font-size: 11px; line-height: 17px; text-align: center; margin-right: 11px; }
    time span { display: block; }
    .desk { width: 14px; height: 39px; border: 1px solid #5d7083; box-sizing: border-box; background: linear-gradient(160deg, #c5d2df, #8095ab 60%, #9db1c5); }
  </style>
  <button class="lang">ES</button>
  <div class="icons">
    <button aria-label="Hidden icons"><svg width="9" height="16"><path d="M0 11l4.500-5L9 11z" fill="#fff" stroke="#516579" stroke-width=".5"/></svg></button>
    <button aria-label="Action centre"><svg width="17" height="18"><path d="M2.500 17V2" stroke="#30404f" stroke-width="3"/><path d="M2.500 16V2M3 2.500h6l1 2h6v5h-5l-1-2H3z" fill="#fff" stroke="#fff"/><path d="M3.500 8.500h6l1 2h5" fill="none" stroke="#30404f"/></svg></button>
    <button aria-label="Power"><svg width="17" height="18"><path d="M3 3h8v12H3z" fill="#6f849a" stroke="#fff" stroke-width="1.500"/><path d="M5 1h4v2H5z" fill="#fff"/><path d="M8 7h7v3l-2 2h-3l-2-2zM9.500 4v3M13.500 4v3M11.500 12v3H8" fill="#fff" stroke="#3b4c5e" stroke-width=".8"/></svg></button>
    <button aria-label="Audio manager"><svg width="17" height="18"><path d="M1 6h4l5-4v14l-5-4H1z" fill="#d9502f" stroke="#6a1d10"/><path d="M12 6q2 3 0 6M14 4q3.500 5 0 10" fill="none" stroke="#f7d7cd" stroke-width="1.200"/></svg></button>
    <button aria-label="Network"><svg width="17" height="18"><path d="M0 12h2.500v3H0zM3.500 10H6v5H3.500zM7 8h2.500v7H7zM10.500 5H13v10h-2.500zM14 2h2.500v13H14z" fill="#eef3f8" stroke="#44566a" stroke-width=".6"/></svg></button>
    <button aria-label="Volume"><svg width="17" height="18"><path d="M1 6h3l5-4v14l-5-4H1z" fill="#fff" stroke="#3f5062"/><path d="M11 7q1.500 2 0 4M13 5q3 4 0 8M15 4q3 5 0 10" fill="none" stroke="#fff" stroke-width="1.200"/></svg></button>
  </div>
  <time datetime="2013-03-19T11:46"><span>11:46 a.m.</span><span>19/03/2013</span></time>
  <button class="desk" aria-label="Show desktop"></button>
</template>

<script>
class TemplateElement extends HTMLElement {
  constructor() {
    super();
    const root = this.attachShadow({ mode: "open" });
    root.append(document.getElementById("t-" + this.localName).content.cloneNode(true));
  }
}

class ModelViewport extends TemplateElement {
  constructor() {
    super();
    this.drawGrid();
  }
  // The work plane is a parallelogram: 5 cells per heavy line, 10 heavy rows deep.
  drawGrid() {
    const corner = [629, 154], left = [-36.8, 3.93], down = [14.28, 10.1];
    const at = (i, j) => [0, 1].map(k => (corner[k] + i * left[k] + j * down[k]).toFixed(1)).join(" ");
    const paths = { minor: "", major: "", edge: "" };
    const rank = n => n === 0 || n === 50 ? "edge" : n % 5 === 0 ? "major" : "minor";
    for (let n = 0; n <= 50; n++) {
      paths[rank(n)] += `M${at(0, n)}L${at(50, n)}`;
      paths[rank(n)] += `M${at(n, 0)}L${at(n, 50)}`;
    }
    const style = { minor: [1.3, .3], major: [1.6, .52], edge: [2, .72] };
    this.shadowRoot.getElementById("grid").innerHTML = Object.keys(paths).map(k =>
      `<path d="${paths[k]}" stroke-width="${style[k][0]}" stroke-opacity="${style[k][1]}"/>`).join("");
  }
}

for (const name of ["title-bar", "tool-button", "app-toolbar", "view-tools", "fillet-panel", "task-button", "system-tray", "task-bar"])
  customElements.define(name, class extends TemplateElement {});
customElements.define("model-viewport", ModelViewport);
customElements.define("design-app", class extends TemplateElement {});
</script>
</body>
</html>
